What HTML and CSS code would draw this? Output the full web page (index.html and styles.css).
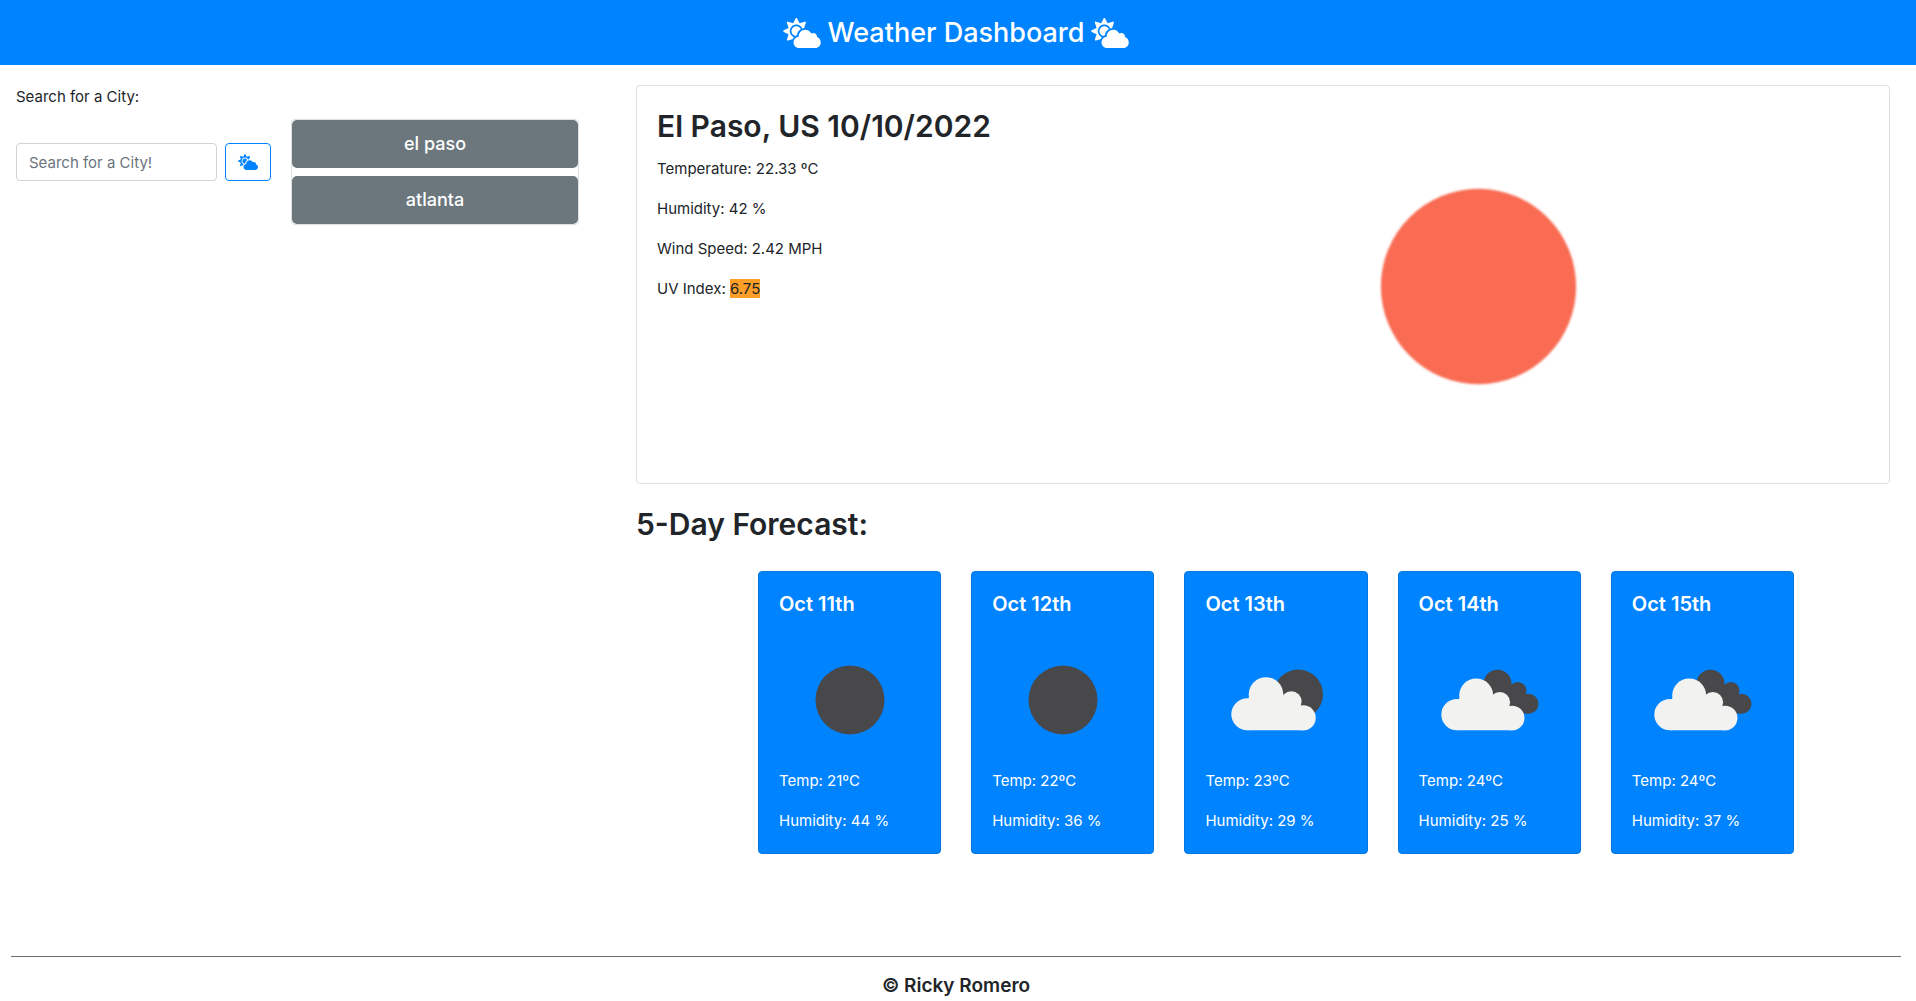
FILE: index.html
```html
<!DOCTYPE html>
<html lang="en">
<head>
  <meta charset="utf-8">
  <meta name="viewport" content="width=device-width, initial-scale=1">
  <title>Weather Dashboard</title>
  <link rel="stylesheet" href="styles.css">
</head>
<body>
  <svg class="sprite" aria-hidden="true">
    <symbol id="cloud-sun" viewBox="0 0 640 512">
      <path d="M575.2 325.7c.2-1.9.8-3.7.8-5.6 0-35.3-28.7-64-64-64-12.6 0-24.2 3.8-34.1 10-17.6-38.8-56.5-66-101.9-66-61.8 0-112 50.1-112 112 0 3 .7 5.8.9 8.7-49.6 3.7-88.9 44.7-88.9 95.3 0 53 43 96 96 96h272c53 0 96-43 96-96 0-42.1-27.2-77.4-64.8-90.4zm-430.4-22.6c-43.7-43.7-43.7-114.7 0-158.3 43.7-43.7 114.7-43.7 158.4 0 9.7 9.7 16.9 20.9 22.3 32.7 9.8-3.7 20.1-6 30.7-7.5L386 81.1c4-11.9-7.3-23.1-19.2-19.2L279 91.2 237.5 8.4C232-2.8 216-2.8 210.4 8.4L169 91.2 81.1 61.9C69.3 58 58 69.3 61.9 81.1l29.3 87.8-82.8 41.5c-11.2 5.6-11.2 21.5 0 27.1l82.8 41.4-29.3 87.8c-4 11.9 7.3 23.1 19.2 19.2l76.1-25.3c6.1-12.4 14-23.7 23.6-33.5-13.1-5.4-25.4-13.4-36-24zm-4.8-79.2c0 40.8 29.3 74.8 67.9 82.3 8-4.7 16.3-8.8 25.2-11.7 5.4-44.3 31-82.5 67.4-105C287.3 160.4 258 140 224 140c-46.3 0-84 37.6-84 83.9z"/>
    </symbol>
    <symbol id="disc" viewBox="0 0 100 100">
      <circle cx="50" cy="50" r="34.5"/>
    </symbol>
    <symbol id="few-clouds" viewBox="0 0 100 100">
      <circle cx="72.3" cy="44.3" r="24.7" fill="#48484a"/>
      <g fill="#f2f2f0">
        <circle cx="21.3" cy="64.3" r="16"/>
        <circle cx="40" cy="44.5" r="17.3"/>
        <circle cx="65.3" cy="51.5" r="10.3"/>
        <circle cx="77.3" cy="67.8" r="12.5"/>
        <path d="M22.7 47L40 40L62 50L76 56L78 80.3H21.3Z"/>
      </g>
    </symbol>
    <symbol id="broken-clouds" viewBox="0 0 100 100">
      <g fill="#48484a">
        <circle cx="58.5" cy="33.7" r="14"/>
        <circle cx="78.8" cy="40.7" r="8.7"/>
        <circle cx="89.5" cy="53.7" r="10"/>
        <path d="M60 30L72.5 35L79 40L87 45L88 63.7L60 60Z"/>
      </g>
      <g fill="#f2f2f0">
        <circle cx="18" cy="64.6" r="15.7"/>
        <circle cx="37.2" cy="45.5" r="17"/>
        <circle cx="60.8" cy="52.3" r="10.3"/>
        <circle cx="73.2" cy="68" r="12.3"/>
        <path d="M20 48.5L36 42L58 51L72 57L74 80.3H18Z"/>
      </g>
    </symbol>
  </svg>

  <header class="banner">
    <svg class="banner-icon" aria-hidden="true"><use href="#cloud-sun"/></svg>
    <h1 class="banner-title">Weather Dashboard</h1>
    <svg class="banner-icon" aria-hidden="true"><use href="#cloud-sun"/></svg>
  </header>

  <main class="layout">
    <aside class="sidebar">
      <form class="search">
        <label class="search-label" for="city">Search for a City:</label>
        <div class="search-row">
          <input class="search-input" id="city" type="text" placeholder="Search for a City!">
          <button class="search-button" type="button" aria-label="Search"><svg class="search-icon" aria-hidden="true"><use href="#cloud-sun"/></svg></button>
        </div>
      </form>
      <div class="history">
        <button class="history-button" type="button">el paso</button>
        <button class="history-button" type="button">atlanta</button>
      </div>
    </aside>

    <div class="content">
      <section class="current">
        <div class="current-details">
          <h2 class="heading">El Paso, US 10/10/2022</h2>
          <p class="reading">Temperature: 22.33 ºC</p>
          <p class="reading">Humidity: 42 %</p>
          <p class="reading">Wind Speed: 2.42 MPH</p>
          <p class="reading">UV Index: <span class="uv">6.75</span></p>
        </div>
        <svg class="current-icon" role="img" aria-label="Clear sky"><use href="#disc"/></svg>
      </section>

      <section class="forecast">
        <h2 class="heading">5-Day Forecast:</h2>
        <div class="days">
          <article class="day">
            <h3 class="day-title">Oct 11th</h3>
            <svg class="day-icon" role="img" aria-label="Clear sky"><use href="#disc"/></svg>
            <p class="reading">Temp: 21ºC</p>
            <p class="reading">Humidity: 44 %</p>
          </article>
          <article class="day">
            <h3 class="day-title">Oct 12th</h3>
            <svg class="day-icon" role="img" aria-label="Clear sky"><use href="#disc"/></svg>
            <p class="reading">Temp: 22ºC</p>
            <p class="reading">Humidity: 36 %</p>
          </article>
          <article class="day">
            <h3 class="day-title">Oct 13th</h3>
            <svg class="day-icon" role="img" aria-label="Few clouds"><use href="#few-clouds"/></svg>
            <p class="reading">Temp: 23ºC</p>
            <p class="reading">Humidity: 29 %</p>
          </article>
          <article class="day">
            <h3 class="day-title">Oct 14th</h3>
            <svg class="day-icon" role="img" aria-label="Broken clouds"><use href="#broken-clouds"/></svg>
            <p class="reading">Temp: 24ºC</p>
            <p class="reading">Humidity: 25 %</p>
          </article>
          <article class="day">
            <h3 class="day-title">Oct 15th</h3>
            <svg class="day-icon" role="img" aria-label="Broken clouds"><use href="#broken-clouds"/></svg>
            <p class="reading">Temp: 24ºC</p>
            <p class="reading">Humidity: 37 %</p>
          </article>
        </div>
      </section>
    </div>
  </main>

  <footer class="footer">© Ricky Romero</footer>
</body>
</html>
```
FILE: styles.css
```css
* { box-sizing: border-box; }

body {
  margin: 0;
  min-height: 100vh;
  display: flex;
  flex-direction: column;
  font: 400 15px/24px Inter, "Liberation Sans", sans-serif;
  color: #212529;
  background: #fff;
}

h1, h2, h3, p { margin: 0; }

.sprite { display: none; }

.banner {
  display: flex;
  justify-content: center;
  align-items: center;
  gap: 7px;
  padding: 10px 20px 10px 16px;
  color: #fff;
  background: #0083ff;
}
.banner-title { font-size: 27px; line-height: 45px; font-weight: 500; }
.banner-icon { width: 38px; height: 30px; fill: currentColor; }

.layout {
  display: grid;
  grid-template-columns: 563fr 1254fr;
  gap: 57px;
  padding: 20px 26px 0 16px;
}

.sidebar {
  display: grid;
  grid-template-columns: minmax(0, 255fr) minmax(0, 288fr);
  gap: 20px;
  align-items: start;
}
.search-label { display: block; margin-bottom: 34px; }
.search-row { display: flex; gap: 8px; }
.search-input {
  flex: 1;
  min-width: 0;
  height: 38px;
  padding: 6px 12px;
  border: 1px solid #ced4da;
  border-radius: 4px;
  font: inherit;
}
.search-input::placeholder { color: #6c757d; opacity: 1; }
.search-button {
  display: flex;
  align-items: center;
  justify-content: center;
  width: 46px;
  height: 38px;
  padding: 0;
  border: 1px solid #0083ff;
  border-radius: 4px;
  color: #0083ff;
  background: #fff;
}
.search-icon { width: 20px; height: 16px; fill: currentColor; }

.history {
  display: grid;
  gap: 8px;
  margin-top: 34px;
  border: 1px solid #dfdfdf;
  border-radius: 4px;
}
.history-button {
  height: 48px;
  border: 0;
  border-radius: 5px;
  font: inherit;
  font-size: 18px;
  font-weight: 500;
  color: #fff;
  background: #6b767d;
}

.heading { font-size: 30px; line-height: 40px; font-weight: 600; }
.reading + .reading { margin-top: 16px; }

.current {
  display: grid;
  grid-template-columns: 1fr 2fr;
  gap: 40px;
  padding: 20px;
  border: 1px solid #dfdfdf;
  border-radius: 4px;
}
.current-details { white-space: nowrap; }
.current .heading { margin-bottom: 11px; }
.uv { background: #ff9f27; }
.current-icon {
  width: 283px;
  height: 283px;
  margin: 39px auto 35px;
  fill: #f96b52;
  filter: blur(1px);
}

.forecast { padding-top: 20px; }
.days {
  display: grid;
  grid-template-columns: repeat(5, 1fr);
  gap: 30px;
  margin-top: 27px;
  padding: 0 96px 0 122px;
}
.day {
  display: flex;
  flex-direction: column;
  padding: 20px;
  border: 1px solid #0776df;
  border-radius: 4px;
  color: #fff;
  background: #0083ff;
}
.day-title { font-size: 20px; line-height: 24px; font-weight: 600; }
.day-icon {
  width: 100px;
  height: 100px;
  margin: 34px auto 19px;
  fill: #48484a;
}

.footer {
  margin: auto 15px 0 11px;
  padding: 17px 0 3px;
  border-top: 1px solid #6b6b6b;
  font-size: 19px;
  font-weight: 600;
  text-align: center;
}
```
